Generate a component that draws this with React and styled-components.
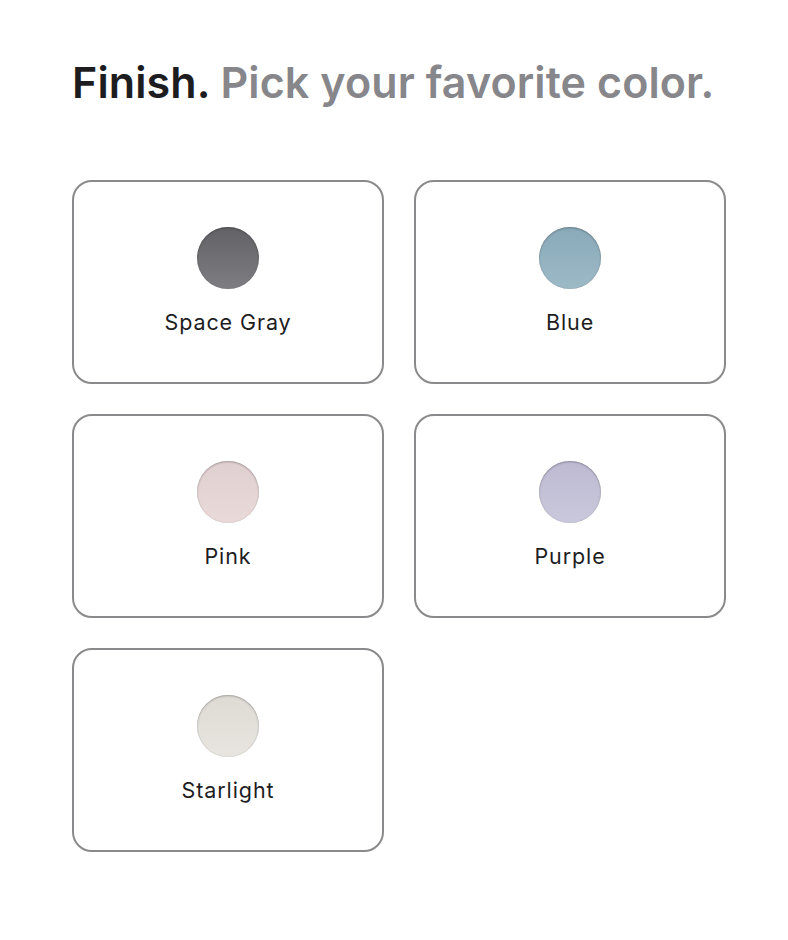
import React from 'react'
import styled, { createGlobalStyle } from 'styled-components'

const colors = [
  { name: 'Space Gray', top: '#626266', bottom: '#7e7d82' },
  { name: 'Blue', top: '#8aaab9', bottom: '#9cb9c6' },
  { name: 'Pink', top: '#e0cfd0', bottom: '#e9dad9' },
  { name: 'Purple', top: '#bdbad2', bottom: '#cac8dc' },
  { name: 'Starlight', top: '#dedbd5', bottom: '#e8e5e0' },
]

const App = () => {
  return (
    <Page>
      <GlobalStyle />
      <Title>
        Finish. <Sub>Pick your favorite color.</Sub>
      </Title>
      <Grid>
        {colors.map((c) => (
          <Card key={c.name}>
            <Swatch top={c.top} bottom={c.bottom} />
            <Label>{c.name}</Label>
          </Card>
        ))}
      </Grid>
    </Page>
  )
}

export default App

const GlobalStyle = createGlobalStyle`
  body {
    margin: 0;
    background: #fff;
    font-family: Inter, "Liberation Sans", Arial, sans-serif;
  }
`

const Page = styled.div`
  padding: 56px 62px 0 72px;
`

const Title = styled.h1`
  margin: 0;
  font-family: Inter, "Liberation Sans", Arial, sans-serif;
  font-size: 43px;
  font-weight: 600;
  letter-spacing: 0.1px;
  color: #1d1d1f;
  line-height: 52px;
  white-space: nowrap;
`

const Sub = styled.span`
  color: #86868b;
`

const Grid = styled.div`
  display: grid;
  grid-template-columns: 312px 312px;
  column-gap: 30px;
  row-gap: 30px;
  margin-top: 72px;
`

const Card = styled.div`
  box-sizing: border-box;
  height: 204px;
  border: 2px solid #8a8a8c;
  border-radius: 20px;
  display: flex;
  flex-direction: column;
  align-items: center;
  padding-top: 45px;
`

const Swatch = styled.div`
  width: 62px;
  height: 62px;
  border-radius: 50%;
  background: linear-gradient(${(p) => p.top}, ${(p) => p.bottom});
  box-shadow: inset 0 1px 2px rgba(0, 0, 0, 0.25), inset 0 0 1px rgba(0, 0, 0, 0.2);
`

const Label = styled.div`
  margin-top: 19px;
  font-family: Inter, "Liberation Sans", Arial, sans-serif;
  font-size: 21.5px;
  line-height: 28px;
  color: #1d1d1f;
  letter-spacing: 0.9px;
`
